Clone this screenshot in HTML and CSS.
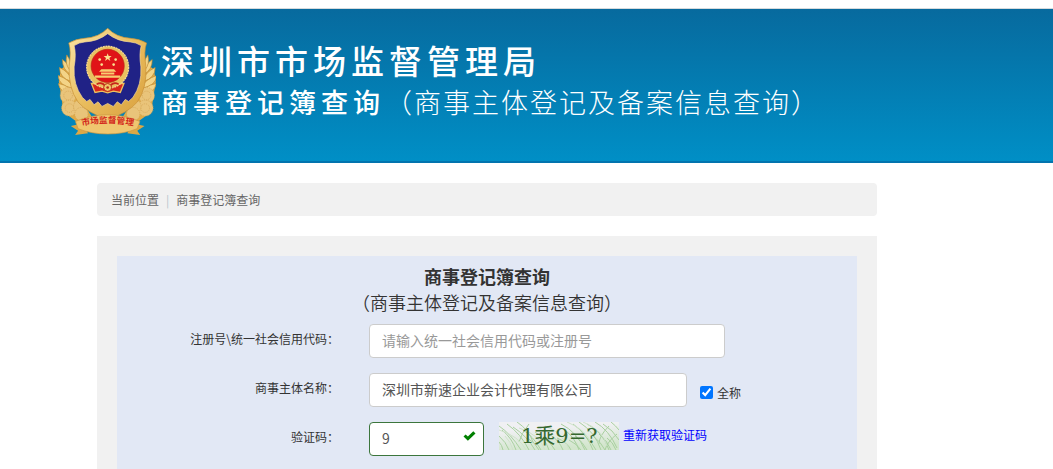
FILE: index.html
```html
<!DOCTYPE html>
<html lang="zh-CN">
<head>
  <meta charset="UTF-8">
  <meta name="viewport" content="width=device-width, initial-scale=1">
  <title>商事登记簿查询</title>
  <link rel="stylesheet" href="styles.css">
</head>
<body>
  <header class="header">
    <svg class="emblem" viewBox="24 25 294 328" aria-hidden="true">
      <defs>
        <linearGradient id="gold" x1="0" y1="0" x2="1" y2="1">
          <stop offset="0" stop-color="#fbe5a6"/>
          <stop offset="0.5" stop-color="#e9bd5e"/>
          <stop offset="1" stop-color="#d99f3c"/>
        </linearGradient>
        <g id="branch">
          <path d="M56 130 L66 150 L84 210 L112 270 L130 300 L84 310 L40 278 L34 235 L26 185 L32 150 Z" fill="#e0ac48"/>
          <g fill="#f3d487" stroke="#c08a30" stroke-width="2">
            <path d="M62 165 Q36 150 37 120 Q60 136 66 165 Z"/>
            <path d="M64 186 Q28 176 28 144 Q56 156 68 186 Z"/>
            <path d="M68 206 Q26 200 24 168 Q56 178 74 208 Z"/>
            <path d="M76 228 Q28 222 25 192 Q60 198 82 230 Z"/>
            <path d="M58 150 Q44 134 50 106 Q66 128 62 150 Z"/>
          </g>
          <g fill="#e9c47a" stroke="#d0a050" stroke-width="2" stroke-dasharray="3 3">
            <circle cx="54" cy="228" r="24"/>
            <circle cx="58" cy="266" r="24"/>
            <circle cx="92" cy="262" r="22"/>
            <circle cx="94" cy="284" r="20"/>
            <circle cx="54" cy="228" r="13"/>
            <circle cx="58" cy="266" r="13"/>
          </g>
        </g>
      </defs>
      <use href="#branch"/>
      <use href="#branch" transform="translate(344 0) scale(-1 1)"/>
      <path d="M173 26 Q200 54 242 56 Q266 57 290 70 Q281 96 288 140 Q292 205 262 248 Q232 282 173 300 Q114 282 84 248 Q54 205 57 140 Q64 96 56 70 Q80 57 103 56 Q146 54 173 26 Z" fill="url(#gold)" stroke="#c99033" stroke-width="2"/>
      <path d="M173 42 Q202 65 241 67 Q258 68 274 78 Q267 104 273 142 Q276 196 249 234 L236 246 L226 240 L214 256 L202 247 L190 261 L173 252 L156 261 L144 247 L132 256 L120 240 L110 246 L97 234 Q69 196 72 142 Q79 104 72 78 Q88 68 104 67 Q144 65 173 42 Z" fill="#202286" stroke="#f9df9c" stroke-width="2"/>
      <path d="M124 192 L222 192 L211 219 L190 215 L173 220 L156 215 L135 219 Z" fill="#d9251c" stroke="#edc15f" stroke-width="4"/>
      <circle cx="173" cy="143" r="63" fill="#e9c160"/>
      <circle cx="173" cy="143" r="63" fill="none" stroke="#f5d88b" stroke-width="4" stroke-dasharray="6 2"/>
      <circle cx="173" cy="139" r="50" fill="#e01418" stroke="#b92b18" stroke-width="2"/>
      <path d="M173 101 L176 109 L185 109 L178 115 L181 124 L173 118 L165 124 L168 115 L161 109 L170 109 Z" fill="#fae28f"/>
      <g fill="#fae28f">
        <circle cx="149" cy="120" r="4"/>
        <circle cx="197" cy="120" r="4"/>
        <circle cx="155" cy="135" r="4"/>
        <circle cx="191" cy="135" r="4"/>
      </g>
      <path d="M147 157 L154 149 L192 149 L199 157 Z M153 159 H193 V165 H153 Z M135 168 H211 V175 H135 Z" fill="#f7ce70"/>
      <path d="M140 194 Q156 186 166 200 M206 194 Q190 186 180 200" fill="none" stroke="#c7261b" stroke-width="5"/>
      <circle cx="173" cy="204" r="12" fill="#efc668" stroke="#b92b18" stroke-width="3"/>
      <circle cx="173" cy="204" r="4" fill="#b92b18"/>
      <path d="M62 320 L96 312 L114 342 L75 347 L84 334 Z M284 320 L250 312 L232 342 L271 347 L262 334 Z" fill="#dca846"/>
      <path d="M76 306 Q124 286 173 286 Q222 286 270 306 L262 328 Q222 344 173 344 Q124 344 84 328 Z" fill="#f0c76f" stroke="#cb9640" stroke-width="2"/>
      <path id="ribbon" d="M84 322 Q173 301 262 322" fill="none"/>
      <text class="emblem-text"><textPath href="#ribbon" startOffset="50%">市场监督管理</textPath></text>
    </svg>
    <div class="site-title">
      <h1>深圳市市场监督管理局</h1>
      <p><strong>商事登记簿查询</strong>（商事主体登记及备案信息查询）</p>
    </div>
  </header>

  <main class="container">
    <nav class="breadcrumb">
      <span>当前位置</span>
      <span class="divider">|</span>
      <span>商事登记簿查询</span>
    </nav>

    <section class="panel">
      <form class="search-form">
        <h2>商事登记簿查询</h2>
        <p class="subtitle">（商事主体登记及备案信息查询）</p>

        <div class="form-group">
          <label class="form-label" for="code">注册号\统一社会信用代码<span class="colon">：</span></label>
          <input class="form-control code" id="code" type="text" placeholder="请输入统一社会信用代码或注册号">
        </div>

        <div class="form-group">
          <label class="form-label" for="name">商事主体名称<span class="colon">：</span></label>
          <input class="form-control name" id="name" type="text" value="深圳市新速企业会计代理有限公司">
          <div class="check">
            <input id="full" type="checkbox" checked>
            <label for="full">全称</label>
          </div>
        </div>

        <div class="form-group">
          <label class="form-label" for="captcha">验证码<span class="colon">：</span></label>
          <div class="captcha-field">
            <input class="form-control valid" id="captcha" type="text" value="9">
            <svg class="tick" viewBox="0 0 12 10" aria-hidden="true">
              <path d="M0 5.6 L2.1 3.5 L4.4 5.6 L9.8 0.3 L12 2.4 L4.4 9.8 Z" fill="#008000"/>
            </svg>
          </div>
          <svg class="captcha" viewBox="0 0 120 28" role="img" aria-label="1乘9=?">
            <defs>
              <linearGradient id="haze" x1="0" y1="0" x2="0.3" y2="1">
                <stop offset="0.3" stop-color="#f0f0f3"/>
                <stop offset="1" stop-color="#d3e6cd"/>
              </linearGradient>
            </defs>
            <rect width="120" height="28" fill="url(#haze)"/>
            <g fill="none" stroke="#a9d0a0" stroke-width="1">
              <path d="M0 4 Q12 12 22 28 M3 8 Q13 16 17 28 M0 14 Q7 20 10 28 M8 2 Q22 12 30 28 M14 5 Q28 14 36 28 M0 20 Q3 23 4 28"/>
              <path d="M18 0 Q30 8 34 20 M24 8 Q34 14 42 28 M30 2 Q22 12 20 20 M36 10 Q46 16 50 28 M28 16 Q36 20 40 28"/>
              <path d="M44 16 Q52 20 56 28 M50 12 Q60 18 64 28 M58 16 Q68 20 72 28 M66 8 Q76 16 80 28 M70 18 Q78 22 82 28"/>
              <path d="M62 2 Q78 10 86 28 M74 2 Q88 12 94 28 M80 0 Q96 10 102 28 M84 12 Q92 18 97 28 M76 14 Q84 20 88 28"/>
              <path d="M88 2 Q104 10 110 28 M96 0 Q110 8 118 26 M104 2 Q114 8 120 18 M112 0 Q117 4 120 8 M100 12 Q108 18 112 28"/>
              <path d="M94 14 Q102 20 106 28 M108 16 Q114 20 117 28 M110 4 Q100 14 100 22 M118 12 Q108 20 106 28"/>
            </g>
            <g fill="none" stroke="#cfe2cb" stroke-width="1">
              <path d="M0 8 Q20 14 27 28 M20 6 Q40 12 46 28 M46 4 Q64 10 70 28 M68 0 Q88 8 92 22 M84 0 Q104 8 108 24 M6 14 Q12 20 14 28"/>
            </g>
            <text x="22" y="21" class="captcha-text">1乘9=?</text>
          </svg>
          <a class="refresh" href="#">重新获取验证码</a>
        </div>
      </form>
    </section>
  </main>
</body>
</html>
```

FILE: styles.css
```css
* {
  margin: 0;
  padding: 0;
  box-sizing: border-box;
}
body {
  display: flex;
  flex-direction: column;
  min-height: 100vh;
  padding-top: 8px;
  background: #fff;
  color: #333;
  font-family: "Noto Sans CJK SC", sans-serif;
  font-size: 12px;
  line-height: 17px;
}

/* header */
.header {
  display: flex;
  align-items: flex-start;
  gap: 5px;
  height: 155px;
  padding: 19px 0 0 58px;
  border-top: 1px solid #d5dadd;
  border-bottom: 2px solid #0274ae;
  background: linear-gradient(#076a9e, #008fc6);
}
.emblem {
  flex: none;
  width: 98px;
  height: 109px;
}
.emblem-text {
  fill: #d3271b;
  font-size: 26px;
  font-weight: bold;
  text-anchor: middle;
}
.site-title {
  padding-top: 15px;
  color: #fff;
  font-family: "Liberation Serif", "Noto Sans CJK SC", serif;
  white-space: nowrap;
}
.site-title h1 {
  font-size: 33px;
  font-weight: 500;
  letter-spacing: 5px;
  line-height: 40px;
}
.site-title p {
  font-size: 27px;
  font-weight: 300;
  letter-spacing: 2px;
  line-height: 42px;
}
.site-title strong {
  font-weight: 500;
  letter-spacing: 5px;
}

/* content */
.container {
  display: flex;
  flex: 1;
  flex-direction: column;
  width: 100%;
  max-width: 877px;
  padding: 20px 0 0 97px;
}
.breadcrumb {
  display: flex;
  gap: 7px;
  margin-bottom: 20px;
  padding: 8px 14px;
  border-radius: 4px;
  background: #f1f1f1;
  color: #666;
}
.divider {
  color: #b8c4cc;
}
.panel {
  display: flex;
  flex: 1;
  flex-direction: column;
  padding: 20px 20px 0;
  background: #f1f1f1;
}

/* form */
.search-form {
  flex: 1;
  padding-top: 7px;
  background: #e2e8f5;
}
.search-form h2,
.subtitle {
  font-size: 18px;
  line-height: 26px;
  text-align: center;
}
.subtitle {
  margin-bottom: 9px;
  font-weight: 350;
}
.form-group {
  display: flex;
  margin-bottom: 15px;
}
.form-label {
  flex: 0 0 30%;
  margin-right: 30px;
  padding-top: 6px;
  text-align: right;
}
.colon {
  font-family: "Noto Sans CJK TC", sans-serif;
}
.form-control {
  height: 34px;
  padding: 5px 12px 7px;
  border: 1px solid #ccc;
  border-radius: 4px;
  background: #fff;
  color: #555;
  font-family: inherit;
  font-size: 14px;
}
.form-control::placeholder {
  color: #999;
}
.code {
  width: 356px;
}
.name {
  width: 318px;
}
.check {
  display: flex;
  align-items: center;
  gap: 4px;
  padding: 4px 0 0 13px;
}
.check input {
  width: 13px;
  height: 13px;
}
.captcha-field {
  position: relative;
  width: 115px;
}
.valid {
  width: 100%;
  border-color: #3c763d;
}
.tick {
  position: absolute;
  top: 9px;
  right: 8px;
  width: 13px;
  height: 10px;
}
.captcha {
  width: 120px;
  height: 28px;
  margin: 0 4px 0 15px;
}
.captcha-text {
  fill: #35682f;
  font-family: "DejaVu Serif", "Noto Sans CJK SC", serif;
  font-size: 21px;
}
.refresh {
  padding-top: 4px;
  color: #00f;
  text-decoration: none;
}
```
